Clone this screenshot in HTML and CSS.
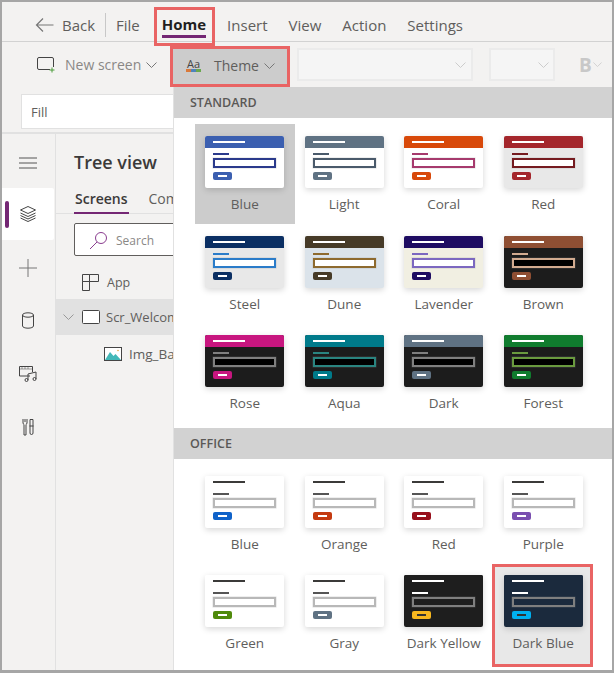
FILE: index.html
```html
<!DOCTYPE html>
<html lang="en">
<head>
    <meta charset="UTF-8">
    <title>Theme</title>
    <link rel="stylesheet" href="styles.css">
</head>
<body>
    <div class="window">
        <div class="menubar">
            <span class="back">
                <svg width="19" height="16" viewBox="0 0 19 16"><path d="M18.500 8H1.500M8 1.500 1.500 8 8 14.500" fill="none" stroke="#777" stroke-width="1.200"/></svg>
                Back
            </span>
            <span class="menu-sep"></span>
            <span class="menu-item menu-file">File</span>
            <span class="menu-item menu-home"><b>Home</b></span>
            <span class="menu-item">Insert</span>
            <span class="menu-item">View</span>
            <span class="menu-item">Action</span>
            <span class="menu-item">Settings</span>
        </div>

        <div class="toolbar">
            <span class="tool new-screen">
                <svg class="new-icon" width="19" height="17" viewBox="0 0 19 17"><path d="M3 1.500h13a1.500 1.500 0 0 1 1.500 1.500v8M14 13.500H3A1.500 1.500 0 0 1 1.500 12V3A1.500 1.500 0 0 1 3 1.500" fill="none" stroke="#444" stroke-width="1"/><path d="M16 11.500v5M13.500 14h5" stroke="#4a9c3b" stroke-width="1"/></svg>
                New screen
                <svg class="chev" width="11" height="6" viewBox="0 0 11 6"><path d="M.5.500l5 5 5-5" fill="none" stroke="#777"/></svg>
            </span>
            <span class="tool theme-tool">
                <span class="aa"><span class="aa-text">Aa</span><span class="aa-dots"><i class="dot-o"></i><i class="dot-b"></i><i class="dot-g"></i></span></span>
                <span class="theme-word">Theme</span>
                <svg class="chev" width="11" height="6" viewBox="0 0 11 6"><path d="M.5.500l5 5 5-5" fill="none" stroke="#777"/></svg>
            </span>
            <span class="combo combo-font"><svg class="chev" width="11" height="6" viewBox="0 0 11 6"><path d="M.5.500l5 5 5-5" fill="none" stroke="#ccc"/></svg></span>
            <span class="combo combo-size"><svg class="chev" width="11" height="6" viewBox="0 0 11 6"><path d="M.5.500l5 5 5-5" fill="none" stroke="#ccc"/></svg></span>
            <span class="bold-tool">B<svg class="chev" width="9" height="5" viewBox="0 0 11 6"><path d="M.5.500l5 5 5-5" fill="none" stroke="#ccc"/></svg></span>
        </div>

        <div class="workspace">
            <div class="left-side">
                <div class="fill-row">
                    <div class="fill-box">Fill</div>
                </div>
                <div class="studio">
                    <nav class="rail">
                        <span class="rail-item">
                            <svg width="18" height="12" viewBox="0 0 18 12"><path d="M0 1h18M0 6h18M0 11h18" stroke="#555" stroke-width="1"/></svg>
                        </span>
                        <span class="rail-item rail-active">
                            <svg width="18" height="18" viewBox="0 0 18 18" fill="none" stroke="#444"><path d="M9 1.500 16.500 5 9 8.500 1.500 5z"/><path d="M1.500 8 9 11.500 16.500 8M1.500 10.500 9 14l7.500-3.500M1.500 13 9 16.500l7.500-3.500"/></svg>
                        </span>
                        <span class="rail-item">
                            <svg width="18" height="18" viewBox="0 0 18 18"><path d="M9 0v18M0 9h18" stroke="#777" stroke-width="1"/></svg>
                        </span>
                        <span class="rail-item">
                            <svg width="14" height="17" viewBox="0 0 14 17" fill="none" stroke="#444"><ellipse cx="7" cy="3" rx="5.500" ry="2.200"/><path d="M1.500 3v11c0 1.200 2.500 2.200 5.500 2.200s5.500-1 5.500-2.200V3"/></svg>
                        </span>
                        <span class="rail-item">
                            <svg width="20" height="17" viewBox="0 0 20 17" fill="none" stroke="#444"><path d="M12 11H1.500V1.500h13V7"/><path d="M1.500 4h13M4 1.500v2.500M7 1.500v2.500M10 1.500v2.500" stroke-dasharray="1 1"/><path d="M10 15V9l8-2v7"/><circle cx="8.500" cy="15" r="1.500"/><circle cx="16.500" cy="14" r="1.500"/></svg>
                        </span>
                        <span class="rail-item">
                            <svg width="12" height="18" viewBox="0 0 12 18" fill="none" stroke="#444"><path d="M1 1v4a2 2 0 0 0 1 1.500V17h2V6.500A2 2 0 0 0 5 5V1M3 1v3"/><path d="M7.500 8h4M8 8V1.500h3V8M8 8v7a1.500 1.500 0 0 0 3 0V8"/></svg>
                        </span>
                    </nav>
                    <aside class="tree">
                        <h2 class="tree-title">Tree view</h2>
                        <div class="tree-tabs">
                            <span class="tree-tab tree-tab-on">Screens</span>
                            <span class="tree-tab">Components</span>
                        </div>
                        <div class="tree-search">
                            <svg width="19" height="19" viewBox="0 0 19 19" fill="none" stroke="#8a3d8f" stroke-width="1"><circle cx="12" cy="7" r="5.500"/><path d="M8 11 1 18"/></svg>
                            Search
                        </div>
                        <div class="tree-row tree-app">
                            <svg width="17" height="17" viewBox="0 0 17 17" fill="none" stroke="#444"><path d="M.5.500h7v7h-7zM7.500.500h9v7h-9zM.5 7.500h7v9h-7z"/></svg>
                            <span>App</span>
                        </div>
                        <div class="tree-row tree-screen">
                            <svg width="11" height="6" viewBox="0 0 11 6"><path d="M.5.500l5 5 5-5" fill="none" stroke="#999"/></svg>
                            <svg class="screen-icon" width="18" height="14" viewBox="0 0 18 14"><rect x=".5" y=".5" width="17" height="13" rx="1" fill="#fff" stroke="#444"/></svg>
                            <span>Scr_Welcome</span>
                        </div>
                        <div class="tree-row tree-img">
                            <svg width="18" height="14" viewBox="0 0 18 14"><rect x=".5" y=".5" width="17" height="13" fill="#fff" stroke="#444"/><path d="M1 13 6 5l3.500 4 2-2L17 13z" fill="#44b8b8"/><circle cx="14" cy="3.500" r=".8" fill="#e8a33d"/></svg>
                            <span>Img_Background</span>
                        </div>
                    </aside>
                </div>
            </div>

            <div class="theme-panel">
                <div class="panel-head">STANDARD</div>
                <div class="theme-grid">
                    <div class="theme-cell cell-selected">
                        <div class="thumb t-blue"><span class="th-head"><i></i></span><span class="th-label"></span><span class="th-input"></span><span class="th-btn"><i></i></span></div>
                        <span class="theme-name">Blue</span>
                    </div>
                    <div class="theme-cell">
                        <div class="thumb t-light"><span class="th-head"><i></i></span><span class="th-label"></span><span class="th-input"></span><span class="th-btn"><i></i></span></div>
                        <span class="theme-name">Light</span>
                    </div>
                    <div class="theme-cell">
                        <div class="thumb t-coral"><span class="th-head"><i></i></span><span class="th-label"></span><span class="th-input"></span><span class="th-btn"><i></i></span></div>
                        <span class="theme-name">Coral</span>
                    </div>
                    <div class="theme-cell">
                        <div class="thumb t-red"><span class="th-head"><i></i></span><span class="th-label"></span><span class="th-input"></span><span class="th-btn"><i></i></span></div>
                        <span class="theme-name">Red</span>
                    </div>
                    <div class="theme-cell">
                        <div class="thumb t-steel"><span class="th-head"><i></i></span><span class="th-label"></span><span class="th-input"></span><span class="th-btn"><i></i></span></div>
                        <span class="theme-name">Steel</span>
                    </div>
                    <div class="theme-cell">
                        <div class="thumb t-dune"><span class="th-head"><i></i></span><span class="th-label"></span><span class="th-input"></span><span class="th-btn"><i></i></span></div>
                        <span class="theme-name">Dune</span>
                    </div>
                    <div class="theme-cell">
                        <div class="thumb t-lavender"><span class="th-head"><i></i></span><span class="th-label"></span><span class="th-input"></span><span class="th-btn"><i></i></span></div>
                        <span class="theme-name">Lavender</span>
                    </div>
                    <div class="theme-cell">
                        <div class="thumb t-brown"><span class="th-head"><i></i></span><span class="th-label"></span><span class="th-input"></span><span class="th-btn"><i></i></span></div>
                        <span class="theme-name">Brown</span>
                    </div>
                    <div class="theme-cell">
                        <div class="thumb t-rose"><span class="th-head"><i></i></span><span class="th-label"></span><span class="th-input"></span><span class="th-btn"><i></i></span></div>
                        <span class="theme-name">Rose</span>
                    </div>
                    <div class="theme-cell">
                        <div class="thumb t-aqua"><span class="th-head"><i></i></span><span class="th-label"></span><span class="th-input"></span><span class="th-btn"><i></i></span></div>
                        <span class="theme-name">Aqua</span>
                    </div>
                    <div class="theme-cell">
                        <div class="thumb t-dark"><span class="th-head"><i></i></span><span class="th-label"></span><span class="th-input"></span><span class="th-btn"><i></i></span></div>
                        <span class="theme-name">Dark</span>
                    </div>
                    <div class="theme-cell">
                        <div class="thumb t-forest"><span class="th-head"><i></i></span><span class="th-label"></span><span class="th-input"></span><span class="th-btn"><i></i></span></div>
                        <span class="theme-name">Forest</span>
                    </div>
                </div>
                <div class="panel-head">OFFICE</div>
                <div class="theme-grid office-grid">
                    <div class="theme-cell">
                        <div class="thumb t-office o-blue"><span class="th-head"><i></i></span><span class="th-label"></span><span class="th-input"></span><span class="th-btn"><i></i></span></div>
                        <span class="theme-name">Blue</span>
                    </div>
                    <div class="theme-cell">
                        <div class="thumb t-office o-orange"><span class="th-head"><i></i></span><span class="th-label"></span><span class="th-input"></span><span class="th-btn"><i></i></span></div>
                        <span class="theme-name">Orange</span>
                    </div>
                    <div class="theme-cell">
                        <div class="thumb t-office o-red"><span class="th-head"><i></i></span><span class="th-label"></span><span class="th-input"></span><span class="th-btn"><i></i></span></div>
                        <span class="theme-name">Red</span>
                    </div>
                    <div class="theme-cell">
                        <div class="thumb t-office o-purple"><span class="th-head"><i></i></span><span class="th-label"></span><span class="th-input"></span><span class="th-btn"><i></i></span></div>
                        <span class="theme-name">Purple</span>
                    </div>
                    <div class="theme-cell">
                        <div class="thumb t-office o-green"><span class="th-head"><i></i></span><span class="th-label"></span><span class="th-input"></span><span class="th-btn"><i></i></span></div>
                        <span class="theme-name">Green</span>
                    </div>
                    <div class="theme-cell">
                        <div class="thumb t-office o-gray"><span class="th-head"><i></i></span><span class="th-label"></span><span class="th-input"></span><span class="th-btn"><i></i></span></div>
                        <span class="theme-name">Gray</span>
                    </div>
                    <div class="theme-cell">
                        <div class="thumb t-office-dark o-darkyellow"><span class="th-head"><i></i></span><span class="th-label"></span><span class="th-input"></span><span class="th-btn"><i></i></span></div>
                        <span class="theme-name">Dark Yellow</span>
                    </div>
                    <div class="theme-cell cell-callout">
                        <div class="thumb t-office-dark o-darkblue"><span class="th-head"><i></i></span><span class="th-label"></span><span class="th-input"></span><span class="th-btn"><i></i></span></div>
                        <span class="theme-name">Dark Blue</span>
                    </div>
                </div>
            </div>
        </div>

        <!-- red callouts from the docs screenshot -->
        <span class="callout callout-home"></span>
        <span class="callout callout-theme"></span>
    </div>
</body>
</html>
```

FILE: styles.css
```css
* {
    box-sizing: border-box;
}
html, body {
    margin: 0;
    height: 100%;
}
body {
    font-family: "Open Sans", "Noto Sans", sans-serif;
    color: #605e5c;
    background: #a6a6a6;
    overflow: hidden;
}
svg {
    flex: none;
}
.window {
    position: relative;
    width: 610px;
    height: 668px;
    margin: 2px 0 0 2px;
    background: #f3f2f1;
    display: flex;
    flex-direction: column;
}

/* top menu */
.menubar {
    height: 40px;
    flex: none;
    display: flex;
    align-items: center;
    padding: 6px 0 0 33px;
    border-bottom: 1px solid #d2d2d2;
    font-size: 15px;
    color: #605e5c;
}
.back {
    display: flex;
    align-items: center;
    gap: 8px;
    width: 70px;
}
.menu-sep {
    width: 1px;
    height: 24px;
    background: #c8c8c8;
}
.menu-item {
    margin-left: 21px;
}
.menu-file {
    margin-left: 10px;
}
.menu-home {
    align-self: flex-start;
    color: #1f1f1f;
    border-bottom: 3px solid #742774;
    height: 24px;
    line-height: 21px;
    margin-top: 6px;
    margin-left: 22px;
}

/* ribbon */
.toolbar {
    height: 45px;
    flex: none;
    display: flex;
    align-items: center;
    padding-left: 34px;
    font-size: 14px;
}
.tool {
    display: flex;
    align-items: center;
}
.new-screen {
    width: 137px;
    color: #8a8886;
}
.new-icon {
    margin-right: 10px;
}
.new-screen .chev {
    margin-left: 5px;
}
.theme-tool {
    height: 39px;
    width: 115px;
    margin-top: 2px;
    background: #cccccc;
    padding-left: 13px;
    color: #605e5c;
}
.aa {
    display: flex;
    flex-direction: column;
    align-items: center;
    width: 15px;
    line-height: 9px;
}
.aa-text {
    font-size: 11px;
    color: #444;
}
.aa-dots {
    display: flex;
    margin-top: 1px;
}
.aa-dots i {
    width: 5px;
    height: 3px;
}
.dot-o { background: #d9793a; }
.dot-b { background: #4f82bd; }
.dot-g { background: #6aa84f; }
.theme-word {
    margin-left: 13px;
    margin-right: 5px;
}
.combo {
    height: 33px;
    display: flex;
    align-items: center;
    justify-content: flex-end;
    padding-right: 5px;
    border: 2px solid #ebebeb;
    background: #f5f5f5;
}
.combo-font {
    width: 176px;
    margin-left: 9px;
}
.combo-size {
    width: 66px;
    margin-left: 16px;
    padding-right: 4px;
}
.bold-tool {
    margin-left: 24px;
    display: flex;
    align-items: center;
    gap: 1px;
    font-weight: 700;
    font-size: 19px;
    color: #c8c8c8;
}

.workspace {
    flex: 1;
    display: flex;
    min-height: 0;
}
.left-side {
    width: 171px;
    flex: none;
    display: flex;
    flex-direction: column;
}
.fill-row {
    height: 47px;
    flex: none;
    padding: 7px 0 0 19px;
    border-bottom: 2px solid #e1e1e1;
}
.fill-box {
    height: 35px;
    background: #fff;
    border: 1px solid #e1e1e1;
    border-right: none;
    padding-left: 9px;
    line-height: 35px;
    font-size: 13px;
    color: #605e5c;
}
.studio {
    flex: 1;
    display: flex;
    min-height: 0;
}

/* left icon rail */
.rail {
    width: 54px;
    flex: none;
    border-right: 1px solid #e1e1e1;
    display: flex;
    flex-direction: column;
}
.rail-item {
    height: 53px;
    display: flex;
    align-items: center;
    justify-content: center;
    margin-right: 1px;
}
.rail-item:first-child {
    height: 54px;
    padding-top: 3px;
}
.rail-active {
    position: relative;
    height: 52px;
    background: #fff;
    border-radius: 0 2px 2px 0;
    margin-bottom: 1px;
}
.rail-active::before {
    content: "";
    position: absolute;
    left: 3px;
    top: 13px;
    width: 4px;
    height: 27px;
    border-radius: 2px;
    background: #742774;
}

/* tree view */
.tree {
    flex: 1;
    min-width: 0;
    overflow: hidden;
}
.tree-title {
    margin: 16px 0 0 18px;
    font-size: 18px;
    font-weight: 600;
    line-height: 24px;
    color: #3b3a39;
    white-space: nowrap;
}
.tree-tabs {
    display: flex;
    gap: 20px;
    margin-top: 12px;
    padding-left: 18px;
    height: 28px;
    border-bottom: 1px solid #e1e1e1;
    font-size: 14px;
    line-height: 26px;
    white-space: nowrap;
}
.tree-tab-on {
    color: #3b3a39;
    font-weight: 600;
    height: 28px;
    padding: 0 1px;
    border-bottom: 2px solid #742774;
}
.tree-search {
    display: flex;
    align-items: center;
    gap: 8px;
    width: 140px;
    height: 33px;
    margin: 9px 0 0 18px;
    padding: 1px 0 0 14px;
    background: #fff;
    border: 1px solid #605e5c;
    border-radius: 2px;
    font-size: 12px;
    color: #8a8886;
}
.tree-row {
    display: flex;
    align-items: center;
    font-size: 12.500px;
    white-space: nowrap;
}
.tree-app {
    height: 33px;
    margin-top: 10px;
    padding-left: 26px;
    gap: 8px;
}
.tree-screen {
    height: 36px;
    background: #e1e1e1;
    padding-left: 7px;
    font-size: 13px;
}
.screen-icon {
    margin: 0 6px 0 8px;
}
.tree-img {
    height: 37px;
    padding-left: 48px;
    gap: 7px;
    font-size: 13.500px;
}

/* theme dropdown */
.theme-panel {
    flex: 1;
    min-width: 0;
    background: #fff;
    border-left: 1px solid #e1e1e1;
}
.panel-head {
    height: 31px;
    background: #d2d2d2;
    padding-left: 16px;
    line-height: 31px;
    font-size: 12.500px;
    font-weight: 600;
    color: #5a5856;
}
.theme-grid {
    display: grid;
    grid-template-columns: repeat(4, 99.500px);
    grid-auto-rows: 99.500px;
    padding: 6px 0 5px 21px;
}
.office-grid {
    padding-top: 6px;
    padding-bottom: 0;
}
.theme-cell {
    display: flex;
    flex-direction: column;
    align-items: center;
    padding-top: 12px;
}
.office-grid .theme-cell {
    padding-top: 11px;
}
.cell-selected {
    background: #cccccc;
}
.cell-callout {
    position: relative;
    background: #e8e8e8;
}
.cell-callout::after {
    content: "";
    position: absolute;
    inset: 0 0 -3px -2px;
    border: 3px solid #e96464;
}
.theme-name {
    margin-top: 6px;
    font-size: 13.500px;
    line-height: 20px;
    color: #605e5c;
    white-space: nowrap;
}

/* theme thumbnail */
.thumb {
    width: 79px;
    height: 52px;
    flex: none;
    display: flex;
    flex-direction: column;
    background: var(--bg, #fff);
    border-radius: 2px;
    overflow: hidden;
    box-shadow: 0 2px 6px rgba(0, 0, 0, 0.16);
}
.th-head {
    height: 12px;
    flex: none;
    padding: 5px 0 0 8px;
    background: var(--head);
}
.th-head i {
    display: block;
    width: 32px;
    height: 2px;
    background: var(--line, #fff);
}
.th-label {
    width: 16px;
    height: 2px;
    margin: 5px 0 0 8px;
    background: var(--label);
}
.th-input {
    width: 63px;
    height: 10px;
    margin: 3px 0 0 8px;
    background: var(--field, #fff);
    border: 2px solid var(--label);
    box-shadow: 0 0 0 .5px rgba(140, 140, 140, 0.3);
}
.th-btn {
    width: 19px;
    height: 8px;
    margin: 4px 0 0 8px;
    padding: 3px 5px 0;
    border-radius: 2px;
    background: var(--btn);
}
.th-btn i {
    display: block;
    height: 2px;
    background: var(--btn-line, #fff);
}

.t-blue { --head: #3b5fb0; --label: #2b3a8c; --btn: #3b5fb0; }
.t-light { --head: #5f7283; --label: #4a5a6b; --btn: #5f7283; }
.t-coral { --head: #d8490a; --label: #a63a6d; --btn: #d8490a; }
.t-red { --bg: #e8e8e8; --head: #a4262c; --label: #751b20; --btn: #a4262c; }
.t-steel { --bg: #e8e8e8; --head: #0b2f63; --label: #2b7cc9; --btn: #0b2f63; }
.t-dune { --bg: #dbe3ea; --head: #463a27; --label: #8e6a2e; --btn: #463a27; }
.t-lavender { --bg: #f1efe2; --head: #1e0c62; --label: #7c68c0; --btn: #1e0c62; }
.t-brown { --bg: #1c1c1c; --field: #000; --head: #8f4f33; --label: #d2ab90; --btn: #8f4f33; }
.t-rose { --bg: #1c1c1c; --field: #000; --head: #c7167f; --label: #7f7f7f; --btn: #c7167f; }
.t-aqua { --bg: #1c1c1c; --field: #000; --head: #007a8a; --label: #2a8480; --btn: #007a8a; }
.t-dark { --bg: #1c1c1c; --field: #000; --head: #5f7283; --label: #7f7f7f; --btn: #5f7283; }
.t-forest { --bg: #1c1c1c; --field: #000; --head: #107c2e; --label: #6a9a3f; --btn: #107c2e; }

.t-office { --head: #fff; --line: #3b3a39; --label: #555; }
.t-office .th-input { border-color: #b8b8b8; }
.t-office-dark { --line: #fff; --label: #fff; }
.t-office-dark .th-input { border-color: #7f7f7f; background: transparent; }
.o-blue { --btn: #0f62c9; }
.o-orange { --btn: #c43a10; }
.o-red { --btn: #98101c; }
.o-purple { --btn: #7a4fb0; }
.o-green { --btn: #4f8a0b; }
.o-gray { --btn: #5f7283; }
.o-darkyellow { --bg: #1e1e1e; --head: #1e1e1e; --btn: #f7b71f; --btn-line: #333; }
.o-darkblue { --bg: #1b2a3d; --head: #1b2a3d; --btn: #00b0f0; --btn-line: #333; }

/* red annotation boxes sit over the ribbon */
.callout {
    position: absolute;
    border: 3px solid #e96464;
    pointer-events: none;
}
.callout-home {
    left: 152px;
    top: 5px;
    width: 61px;
    height: 39px;
}
.callout-theme {
    left: 168px;
    top: 44px;
    width: 120px;
    height: 41px;
}
```
